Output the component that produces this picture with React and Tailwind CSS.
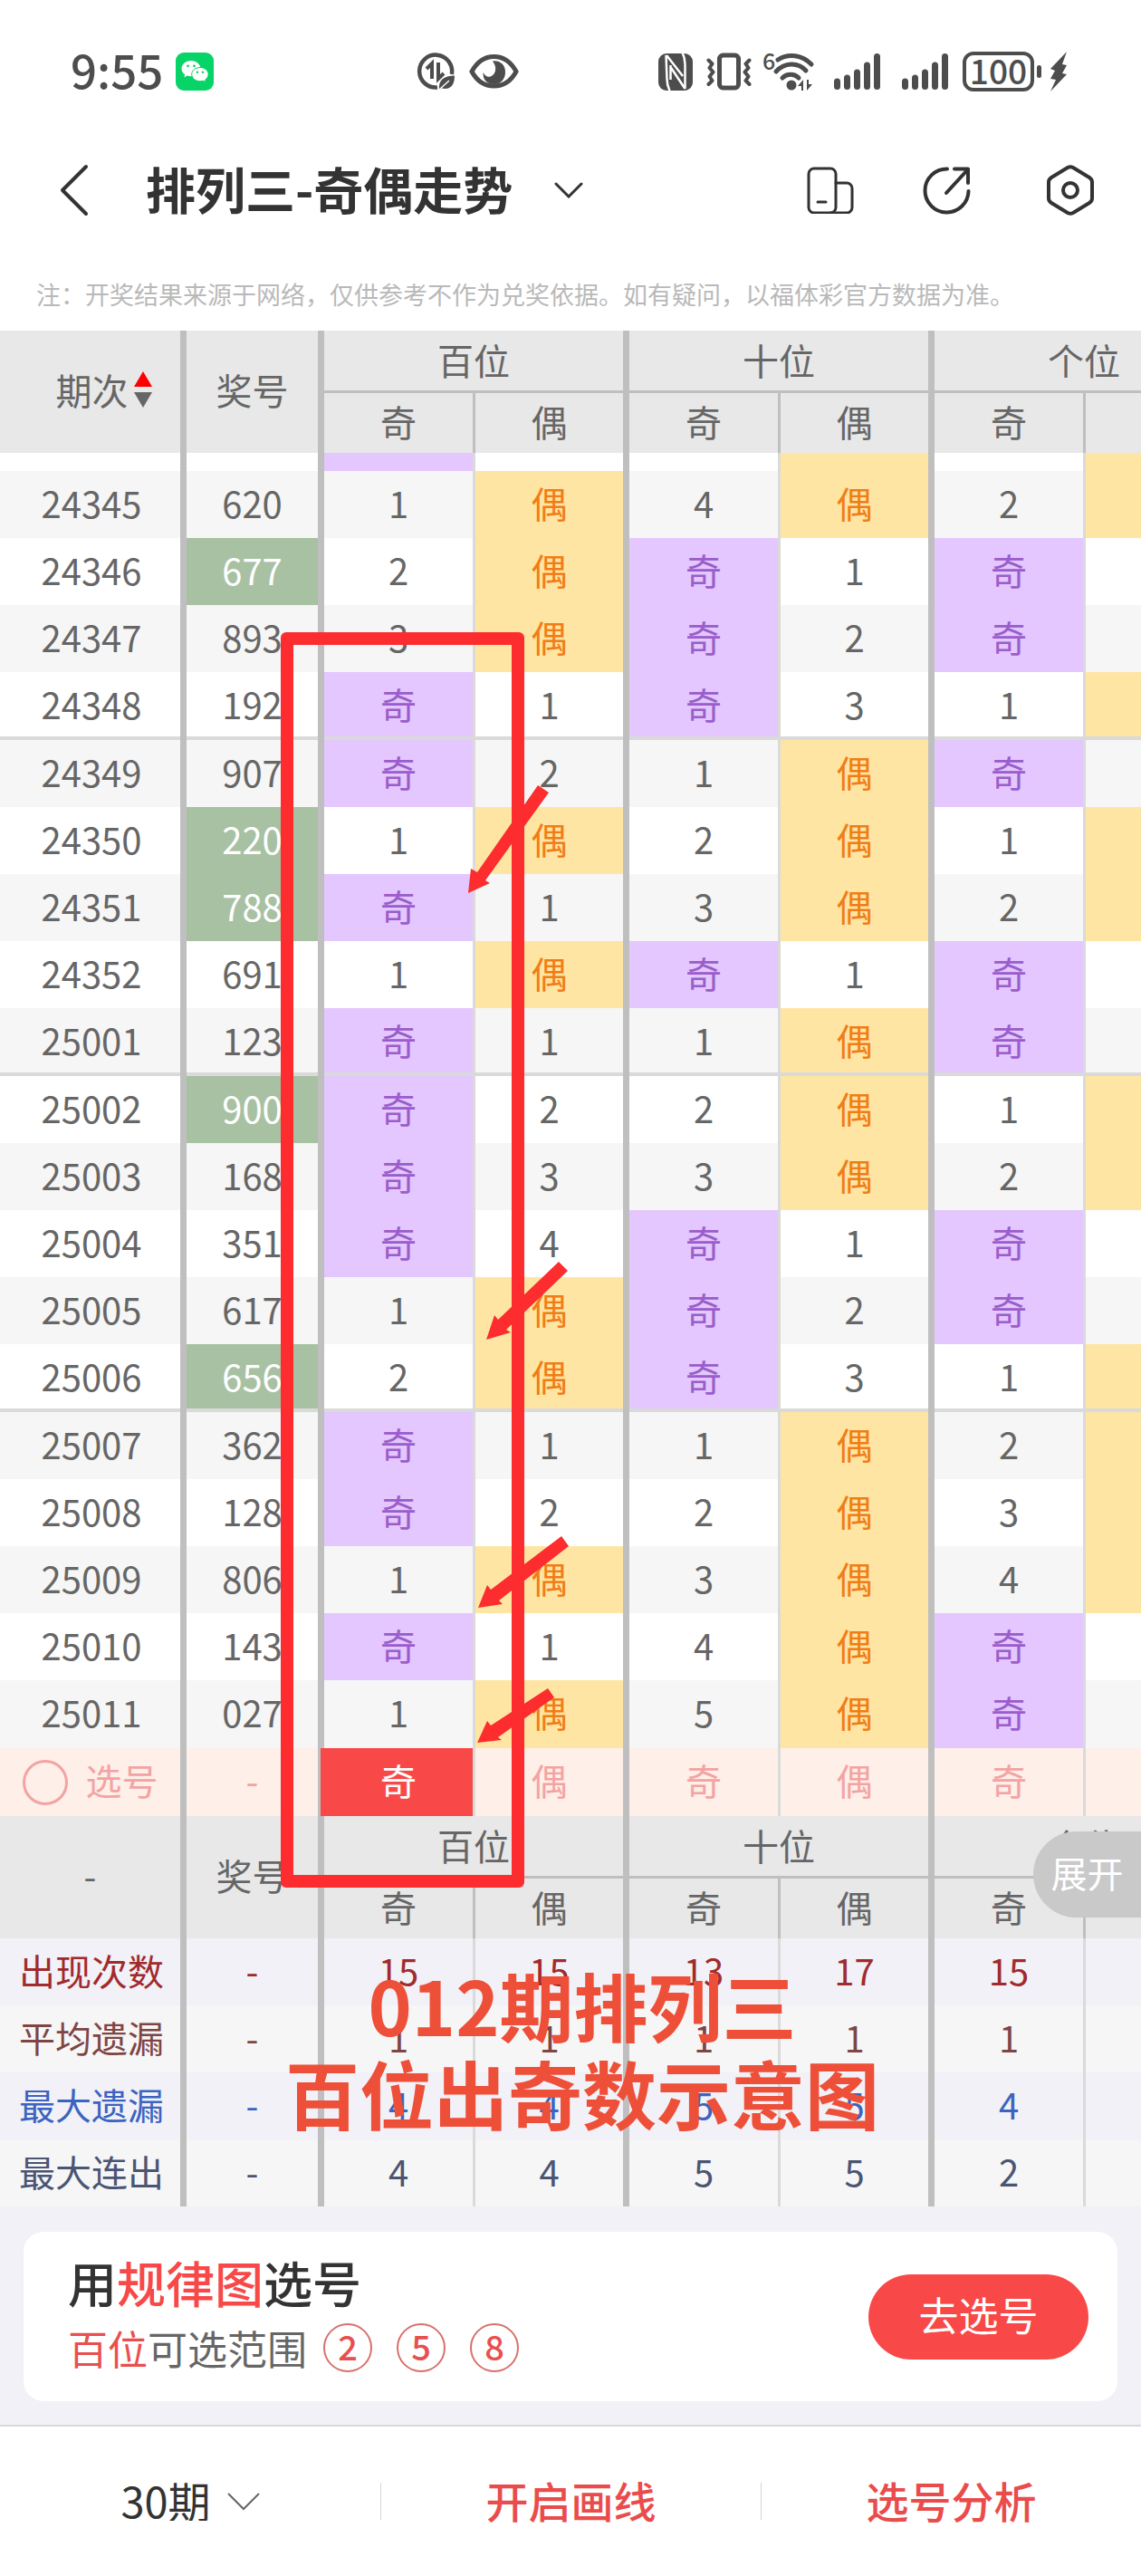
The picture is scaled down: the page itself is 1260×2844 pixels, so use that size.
import { useState } from "react";

const DRAWS = [
    ["24345", "620"], ["24346", "677"], ["24347", "893"], ["24348", "192"],
    ["24349", "907"], ["24350", "220"], ["24351", "788"], ["24352", "691"], ["25001", "123"],
    ["25002", "900"], ["25003", "168"], ["25004", "351"], ["25005", "617"], ["25006", "656"],
    ["25007", "362"], ["25008", "128"], ["25009", "806"], ["25010", "143"], ["25011", "027"],
];

const PLACES = ["百位", "十位", "个位"];

const STATS = [
    { label: "出现次数", values: [15, 15, 13, 17, 15, 15], className: "bg-[#f1f1f7] text-[#a12a2c]" },
    { label: "平均遗漏", values: [1, 1, 1, 1, 1, 1], className: "bg-[#f6f6f6] text-[#7f4545]" },
    { label: "最大遗漏", values: [4, 4, 5, 5, 4, 2], className: "bg-[#f1f1f7] text-[#3b64c0]" },
    { label: "最大连出", values: [4, 4, 5, 5, 2, 4], className: "bg-[#f6f6f6] text-[#4b5573]" },
];

const THICK = "pb-[5px] border-r-[7px] border-[#bfbfbf]";
const THIN = "pb-[5px] border-r-[3px] border-[#dadada]";
const HEAD_THIN = "pb-[5px] border-r-[3px] border-[#bfbfbf]";

// every cell is either the parity name or how many draws it has been missing
function buildRows() {
    const odd = [0, 3, 1];
    const even = [0, 0, 0];
    return DRAWS.map(([period, number]) => {
        const cells = [...number].flatMap((digit, i) => {
            const isOdd = Number(digit) % 2 === 1;
            odd[i] = isOdd ? 0 : odd[i] + 1;
            even[i] = isOdd ? even[i] + 1 : 0;
            return [odd[i], even[i]];
        });
        return { period, number, cells, pair: new Set(number).size < 3 };
    });
}

const ROWS = buildRows();

function SignalIcon() {
    return (
        <svg width="51" height="42" viewBox="0 0 51 42" stroke="#4d4d4d" strokeWidth="7" strokeLinecap="round">
            <path d="M3.500 32v5.500M14.500 28v9.500M25.500 22v15.500M36.500 14v23.500M47.500 4.500v33" />
        </svg>
    );
}

function StatusBar() {
    return (
        <div className="flex h-[158px] items-center pl-[78px] pr-[81px] text-[#4d4d4d]">
            <div className="flex w-[382px] items-center gap-[14px]">
                <span className="pb-[6px] text-[51px] font-medium leading-none">9:55</span>
                <svg width="42" height="42" viewBox="0 0 42 42">
                    <rect width="42" height="42" rx="9" fill="#06d467" />
                    <path d="M17 9c-6 0-10.500 4-10.500 8.700 0 2.700 1.400 5 3.700 6.600l-.9 3 3.500-1.700c1.300.4 2.700.6 4.200.6 6 0 10.500-4 10.500-8.500S23 9 17 9z" fill="#fff" />
                    <path d="M27 16.500c-5.200 0-9.300 3.400-9.300 7.600s4.100 7.600 9.300 7.600c1.200 0 2.400-.2 3.500-.5l2.900 1.500-.8-2.600c2.100-1.400 3.500-3.500 3.500-6 0-4.200-4-7.600-9.100-7.600z" fill="#fff" stroke="#06d467" />
                    <g fill="#06d467">
                        <circle cx="13.500" cy="14.800" r="1.400" />
                        <circle cx="20.500" cy="14.800" r="1.400" />
                        <circle cx="24" cy="21.800" r="1.200" />
                        <circle cx="30" cy="21.800" r="1.200" />
                    </g>
                </svg>
            </div>
            <div className="flex items-center gap-[16px]">
                <svg width="42" height="42" viewBox="0 0 42 42" fill="none" stroke="#4d4d4d" strokeWidth="4.500">
                    <path d="M23 38.500A18 18 0 1 1 38.800 24" />
                    <path d="M11 18l6-6v17M24 11v18l6-6" strokeWidth="4" />
                    <path d="M25 41c-1-11 5-15 17-15.500 0 11-5 16-14 14z" fill="#4d4d4d" stroke="none" />
                    <path d="M25 41l11-10" stroke="#fff" strokeWidth="1.500" />
                </svg>
                <svg width="55" height="42" viewBox="0 0 55 42">
                    <path d="M3 21C9 10 17 4.500 27.500 4.500S46 10 52 21c-6 11-14 16-24.500 16S9 32 3 21z" fill="none" stroke="#4d4d4d" strokeWidth="5" />
                    <path d="M26 9.500c8-1 14 4 14 12s-5 13.500-12.500 13.500C20 35 15 30 15.500 22c2 4 5 5.500 8 4.500 6-2 8-10 2.500-17z" fill="#4d4d4d" />
                </svg>
            </div>
            <div className="ml-auto flex items-center">
                <svg width="38" height="42" viewBox="0 0 38 42">
                    <rect y="1" width="38" height="41" rx="9" fill="#4d4d4d" />
                    <path d="M8.500 3l1 26c0 5 1 9 3 13M9 3l18 23M13.500 16L29.500 40M26.500 0c2 4 3 8 3 13v27M13.500 14v16" fill="none" stroke="#fff" strokeWidth="2.500" />
                </svg>
                <svg className="ml-[15px]" width="50" height="42" viewBox="0 0 50 42" fill="none" stroke="#4d4d4d" strokeLinecap="round" strokeLinejoin="round">
                    <rect x="14.500" y="3" width="21" height="36" rx="4" strokeWidth="5" />
                    <path d="M2.500 8.500l4 4-3 4.500 4 4.500-4 5 3 4.500-4 4M47.500 8.500l-4 4 3 4.500-4 4.500 4 5-3 4.500 4 4" strokeWidth="4" />
                </svg>
                <svg className="ml-[12px]" width="59" height="44" viewBox="0 0 59 44" fill="none" stroke="#4d4d4d" strokeLinecap="round">
                    <text x="0" y="20" fontSize="25" fontWeight="500" fill="#4d4d4d" stroke="none">6</text>
                    <path d="M17 9c12-8 27-5 37 5M15 22c9-10 24-11 33-1M22 29c5-5 13-5 18 0" strokeWidth="5" />
                    <circle cx="32" cy="37" r="5.500" fill="#4d4d4d" stroke="none" />
                    <path d="M39 38l6-7v12h-2v-5zM55 36l-6 7V31h2v5z" fill="#4d4d4d" stroke="none" />
                </svg>
                <div className="ml-[20px] flex gap-[24px]">
                    <SignalIcon />
                    <SignalIcon />
                </div>
                <div className="ml-[16px] flex h-[44px] w-[79px] items-center justify-center rounded-[12px] border-[4px] border-[#4d4d4d] pb-[4px] text-[37px] font-medium leading-none">100</div>
                <div className="ml-[3px] h-[14px] w-[5px] rounded-full bg-[#4d4d4d]" />
                <svg className="ml-[9px]" width="20" height="44" viewBox="0 0 20 44">
                    <path d="M19 0L1 19l5 2-5 9 6 1-6 13 18-19-5-1 5-9-5-1z" fill="#4d4d4d" />
                </svg>
            </div>
        </div>
    );
}

function TitleBar() {
    return (
        <header className="flex h-[104px] items-center pl-[66px] pr-[52px] text-[#333]">
            <button aria-label="返回">
                <svg width="32" height="58" viewBox="0 0 32 58" fill="none" stroke="#333" strokeWidth="4" strokeLinecap="round" strokeLinejoin="round">
                    <path d="M29 3L3 29l26 26" />
                </svg>
            </button>
            <button className="ml-[63px] flex items-center gap-[46px]">
                <h1 className="pb-[5px] text-[55px] font-bold leading-none">排列三-奇偶走势</h1>
                <svg width="32" height="18" viewBox="0 0 32 18" fill="none" stroke="#333" strokeWidth="3" strokeLinecap="round">
                    <path d="M2 2l14 14L30 2" />
                </svg>
            </button>
            <div className="ml-auto flex items-center">
                <button aria-label="横屏">
                    <svg width="52" height="52" viewBox="0 0 52 52" fill="none" stroke="#333" strokeWidth="3" strokeLinecap="round">
                        <rect x="2" y="2" width="30" height="49" rx="6" />
                        <path d="M32 18h12a6 6 0 0 1 6 6v21a6 6 0 0 1-6 6H26" />
                        <path d="M12 39h9" />
                    </svg>
                </button>
                <button className="ml-[76px]" aria-label="分享">
                    <svg width="54" height="54" viewBox="0 0 54 54" fill="none" stroke="#333" strokeWidth="4" strokeLinecap="round" strokeLinejoin="round">
                        <path d="M27 3.500A24 24 0 1 0 50.500 28" />
                        <path d="M26 30L49 5M35 3.500h15V19" />
                    </svg>
                </button>
                <button className="ml-[83px]" aria-label="设置">
                    <svg width="52" height="56" viewBox="0 0 52 56" fill="none" stroke="#333" strokeWidth="4" strokeLinejoin="round">
                        <path d="M23 3q3-1.500 6 0l18 11q3 2 3 5v18q0 3-3 5L29 53q-3 1.500-6 0L5 42q-3-2-3-5V19q0-3 3-5z" />
                        <circle cx="26" cy="28" r="8" />
                    </svg>
                </button>
            </div>
        </header>
    );
}

function HeadRows({ first }) {
    return (
        <>
            <tr className="h-[69px]">
                <th rowSpan={2} className={`font-normal ${THICK}`}>{first}</th>
                <th rowSpan={2} className={`font-normal ${THICK}`}>奖号</th>
                {PLACES.map((place) => (
                    <th key={place} colSpan={2} className={`font-normal shadow-[inset_0_-3px_0_#bfbfbf] ${THICK}`}>{place}</th>
                ))}
            </tr>
            <tr className="h-[66px]">
                {PLACES.map((place) => [
                    <th key={place + "奇"} className={`font-normal ${HEAD_THIN}`}>奇</th>,
                    <th key={place + "偶"} className={`font-normal ${THICK}`}>偶</th>,
                ])}
            </tr>
        </>
    );
}

function TrendCell({ miss, isOdd, line }) {
    const hit = isOdd ? "bg-[#e3c7fe] text-[#9a5dcb]" : "bg-[#ffe5a3] text-[#f07d15]";
    return (
        <td className={`${isOdd ? THIN : THICK} ${miss === 0 ? hit : ""} ${line}`}>
            {miss === 0 ? (isOdd ? "奇" : "偶") : miss}
        </td>
    );
}

function TrendTable() {
    const [picked, setPicked] = useState([0]);

    const toggle = (i) => {
        setPicked(picked.includes(i) ? picked.filter((p) => p !== i) : [...picked, i]);
    };

    return (
        <div className="overflow-hidden">
            <table className="w-[1369px] table-fixed border-separate border-spacing-0 text-center text-[40px] leading-none text-[#666]">
                <colgroup>
                    <col className="w-[206px]" />
                    <col className="w-[152px]" />
                    <col className="w-[167px]" />
                    <col className="w-[170px]" />
                    <col className="w-[167px]" />
                    <col className="w-[170px]" />
                    <col className="w-[167px]" />
                    <col className="w-[170px]" />
                </colgroup>
                <thead className="bg-[#e8e8e8]">
                    <HeadRows
                        first={
                            <div className="flex items-center justify-center gap-[6px] pl-[30px]">
                                期次
                                <svg width="20" height="40" viewBox="0 0 20 40">
                                    <path d="M10 0l10 17H0z" fill="#f00" />
                                    <path d="M10 40L0 23h20z" fill="#666" />
                                </svg>
                            </div>
                        }
                    />
                </thead>
                <tbody>
                    {/* tail of the row scrolled under the header */}
                    <tr className="h-[20px]">
                        <td className={THICK} />
                        <td className={THICK} />
                        <td className={`bg-[#e3c7fe] ${THIN}`} />
                        <td className={THICK} />
                        <td className={THIN} />
                        <td className={`bg-[#ffe5a3] ${THICK}`} />
                        <td className={THIN} />
                        <td className={`bg-[#ffe5a3] ${THICK}`} />
                    </tr>
                    {ROWS.map((row, i) => {
                        // a rule closes every block of five draws, except above the pick row
                        const closes = i % 5 === 3;
                        const line = closes && i < ROWS.length - 1 ? "shadow-[inset_0_-4px_0_#dadada]" : "";
                        return (
                            <tr key={row.period} className={`${closes ? "h-[75px]" : "h-[74px]"} ${i % 2 === 0 ? "bg-[#f6f6f6]" : "bg-white"}`}>
                                <td className={`pl-[3px] ${THICK} ${line}`}>{row.period}</td>
                                <td className={`${THICK} ${row.pair ? "bg-[#a8c1a3] text-white" : ""} ${line}`}>{row.number}</td>
                                {row.cells.map((miss, c) => (
                                    <TrendCell key={c} miss={miss} isOdd={c % 2 === 0} line={line} />
                                ))}
                            </tr>
                        );
                    })}
                    <tr className="h-[75px] bg-[#feefe8] text-[#f3a3a3]">
                        <td className="border-r-[7px] border-[#bfbfbf]">
                            <label className="flex items-center justify-center gap-[20px]">
                                <input type="radio" name="pick" className="size-[50px] appearance-none rounded-full border-[3px] border-[#f3a3a3]" />
                                <span className="pb-[5px]">选号</span>
                            </label>
                        </td>
                        <td className={THICK}>-</td>
                        {[0, 1, 2, 3, 4, 5].map((i) => (
                            <td key={i} className={i % 2 === 0 ? "border-r-[3px] border-[#dadada] p-0" : "border-r-[7px] border-[#bfbfbf] p-0"}>
                                <button
                                    onClick={() => toggle(i)}
                                    className={`block h-[75px] pb-[5px] ${picked.includes(i) ? "relative -ml-1 w-[168px] bg-[#f94848] pl-1 text-white" : "w-full"}`}
                                >
                                    {i % 2 === 0 ? "奇" : "偶"}
                                </button>
                            </td>
                        ))}
                    </tr>
                </tbody>
                <tbody className="bg-[#e8e8e8]">
                    <HeadRows first="-" />
                </tbody>
                <tbody>
                    {STATS.map((stat) => (
                        <tr key={stat.label} className={`h-[74px] ${stat.className}`}>
                            <td className={`pl-[3px] ${THICK}`}>{stat.label}</td>
                            <td className={THICK}>-</td>
                            {stat.values.map((value, i) => (
                                <td key={i} className={i % 2 === 0 ? THIN : THICK}>{value}</td>
                            ))}
                        </tr>
                    ))}
                </tbody>
            </table>
        </div>
    );
}

// hand-drawn marks lying over the table
function Marks() {
    return (
        <div className="pointer-events-none">
            <div className="absolute left-[310px] top-[333px] h-[1386px] w-[269px] rounded-[6px] border-[14px] border-[#fc2c2f]" />
            <svg className="absolute left-[510px] top-[495px]" width="120" height="1070" viewBox="510 860 120 1070" fill="#fc2c2f">
                <path d="M594 867l12 8-70 97 5 3-24 11 3-27 7 4z" />
                <path d="M617 1393l10 10-68 65 5 3-27 8 9-27 4 5z" />
                <path d="M620 1696l8 11-77 60 4 4-27 4 10-25 4 5z" />
                <path d="M605 1864l7 10-62 44 4 3-27 3 11-24 4 5z" />
            </svg>
            <p className="absolute left-[313px] top-[1799px] w-[660px] whitespace-nowrap text-center text-[82px] font-bold leading-[97px] text-[#ee4f38]">
                012期排列三
                <br />
                百位出奇数示意图
            </p>
        </div>
    );
}

function PickCard() {
    return (
        <section className="bg-[#f1f1f7] px-[26px] pb-[26px] pt-[28px]">
            <div className="flex h-[187px] items-center justify-between rounded-[22px] bg-white pl-[49px] pr-[32px]">
                <div className="pb-[4px]">
                    <h2 className="text-[54px] font-medium leading-[72px] text-[#333]">
                        用<span className="text-[#f94848]">规律图</span>选号
                    </h2>
                    <div className="flex items-center text-[44px] leading-[72px] text-[#666]">
                        <span className="text-[#e8504f]">百位</span>可选范围
                        <div className="ml-[18px] flex gap-[27px]">
                            {[2, 5, 8].map((n) => (
                                <span key={n} className="flex size-[54px] items-center justify-center rounded-full border-2 border-[#d9706c] pb-[4px] text-[38px] font-medium leading-none text-[#e8504f]">{n}</span>
                            ))}
                        </div>
                    </div>
                </div>
                <button className="h-[94px] w-[243px] rounded-full bg-[#f94848] pb-[5px] text-[44px] leading-none text-white">去选号</button>
            </div>
        </section>
    );
}

function BottomBar() {
    return (
        <footer className="grid h-[167px] grid-cols-3 items-center border-t-2 border-[#d8d8dc] text-[47px] leading-none">
            <div className="flex items-center justify-center gap-[18px] text-[#333]">
                <select aria-label="期数" className="appearance-none bg-transparent pb-[5px] [field-sizing:content]">
                    <option>30期</option>
                </select>
                <svg width="36" height="20" viewBox="0 0 36 20" fill="none" stroke="#666" strokeWidth="2">
                    <path d="M1 1l17 17L35 1" />
                </svg>
            </div>
            {["开启画线", "选号分析"].map((label) => (
                <div key={label} className="flex items-center">
                    <span className="h-[41px] w-px bg-[#d5d5d5]" />
                    <button className="grow pb-[5px] font-medium leading-none text-[#ea4b4b]">{label}</button>
                </div>
            ))}
        </footer>
    );
}

export default function App() {
    return (
        <div className="w-full overflow-hidden bg-white font-['Noto_Sans_CJK_SC',sans-serif]">
            <StatusBar />
            <TitleBar />
            <p className="px-[40px] pb-[20px] pt-[43px] text-[27px] leading-[40px] text-[#b9b9b9]">
                注：开奖结果来源于网络，仅供参考不作为兑奖依据。如有疑问，以福体彩官方数据为准。
            </p>
            <main className="relative">
                <TrendTable />
                <Marks />
                <button className="absolute right-0 top-[1657px] h-[95px] w-[119px] rounded-l-full bg-[#c9c9c9] pb-[5px] text-[40px] leading-none text-white">展开</button>
            </main>
            <PickCard />
            <BottomBar />
        </div>
    );
}
